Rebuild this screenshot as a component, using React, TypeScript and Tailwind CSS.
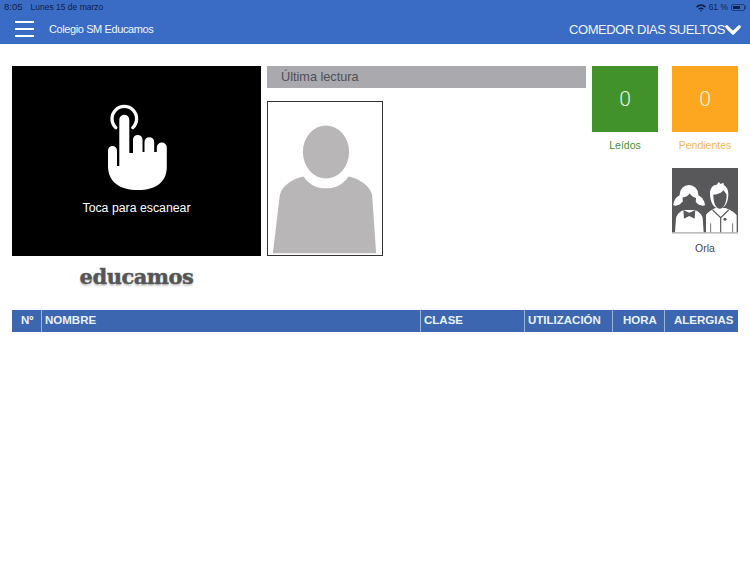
const columns = [
  { label: "Nº", width: "w-[30px]", pad: "pl-[9px]" },
  { label: "NOMBRE", width: "w-[379px]", pad: "pl-[3px]" },
  { label: "CLASE", width: "w-[104px]", pad: "pl-[3px]" },
  { label: "UTILIZACIÓN", width: "w-[88px]", pad: "pl-[3px]" },
  { label: "HORA", width: "w-[52px]", pad: "pl-[10px]" },
  { label: "ALERGIAS", width: "w-[73px]", pad: "pl-[9px]" },
];

function HandIcon() {
  return (
    <svg width="60" height="88" viewBox="106 103 60 88" className="block">
      <path
        d="M114.8 127.6 A12.3 12.3 0 1 1 131.8 127.6"
        fill="none"
        stroke="#fff"
        strokeWidth="3.3"
        strokeLinecap="round"
      />
      <path
        d="M118.3 119.7 a5 5 0 0 1 10 0 V153 H132 V139.7 a4.75 4.75 0 0 1 9.5 0 V152 H143.5 V142 a4.85 4.85 0 0 1 9.7 0 V152 H155.8 V147.5 a5 5 0 0 1 10 0 V167 C165.8 182 155 190 137 190 C119 190 107 182 107 166 V150.5 a4.5 4.5 0 0 1 9 0 V166 H118.3 Z"
        fill="#fff"
      />
    </svg>
  );
}

function PersonIcon() {
  return (
    <svg viewBox="0 0 116 154" className="block h-full w-full">
      <ellipse cx="59" cy="50" rx="23.5" ry="27" fill="#b8b6b7" />
      <path
        d="M5 153 L12 94 C14 84 26 77 36 75 C42 84 50 87 59 87 C68 87 76 84 82 75 C92 77 104 84 106 94 L110 153 Z"
        fill="#b8b6b7"
      />
    </svg>
  );
}

function OrlaIcon() {
  return (
    <svg viewBox="0 0 198 198" className="block h-full w-full">
      <rect width="198" height="198" fill="#58585a" />
      <rect y="193" width="198" height="5" fill="#d4d4d4" />
      {/* niña */}
      <path d="M9 193 L12 150 C16 136 28 128 38 126 H66 C76 128 88 136 92 150 L95 193 Z" fill="#fff" />
      <ellipse cx="51" cy="80" rx="28" ry="29" fill="#fff" />
      <path d="M28 80 C16 82 4 96 4 112 C14 116 26 110 32 100 Z" fill="#fff" />
      <path d="M74 80 C86 82 98 96 99 112 C88 116 76 110 70 100 Z" fill="#fff" />
      <path d="M32 88 C42 88 50 82 53 76 C57 84 64 88 72 90 C72 110 64 124 52 124 C40 124 31 110 32 88 Z" fill="#58585a" />
      <path d="M34 126 L52 134 L70 126 L68 152 L52 144 L36 152 Z" fill="#58585a" />
      {/* niño */}
      <path d="M102 193 V140 C110 130 122 124 130 120 H160 C170 124 186 130 194 142 V193 Z" fill="#fff" />
      <path d="M114 76 C114 60 124 50 134 50 L140 42 L146 48 L154 44 L156 52 C164 56 169 66 169 78 C169 104 158 122 142 122 C126 122 114 104 114 76 Z" fill="#fff" />
      <path d="M124 80 C134 80 148 76 154 66 C158 72 162 76 164 80 C164 106 154 122 144 122 C132 122 124 106 124 80 Z" fill="#58585a" />
      <path d="M122 126 L146 149 L170 126" fill="none" stroke="#58585a" strokeWidth="3.5" />
      <path d="M146 149 V193" stroke="#58585a" strokeWidth="3.5" />
      <circle cx="159" cy="154" r="4.5" fill="#58585a" />
      <path d="M116 166 V193 M182 166 V193" stroke="#58585a" strokeWidth="2.5" />
    </svg>
  );
}

export default function App() {
  return (
    <div className="h-[562px] w-[750px] overflow-hidden bg-white font-['Liberation_Sans',Arial,sans-serif]">
      <header className="h-[44px] bg-[#3b6cc5]">
        <div className="flex h-[14px] items-center justify-between pl-[4px] pr-[4px] pt-[1px] text-[8.5px] text-[#10204a]">
          <div className="flex items-center gap-[8px]">
            <span className="text-[9.5px]">8:05</span>
            <span>Lunes 15 de marzo</span>
          </div>
          <div className="flex items-center gap-[3px]">
            <svg width="10" height="8" viewBox="0 0 10 8">
              <path d="M0 2.6 C3 -0.6 7 -0.6 10 2.6 L8.8 3.8 C6.4 1.4 3.6 1.4 1.2 3.8 Z" fill="#10204a" />
              <path d="M2.2 4.7 C3.8 3 6.2 3 7.8 4.7 L6.7 5.8 C5.6 4.8 4.4 4.8 3.3 5.8 Z" fill="#10204a" />
              <path d="M4 6.5 C4.6 6 5.4 6 6 6.5 L5 7.7 Z" fill="#10204a" />
            </svg>
            <span>61 %</span>
            <div className="flex items-center">
              <div className="h-[7px] w-[14px] rounded-[2px] border border-[#10204a]/60 p-[1px]">
                <div className="h-full w-[7px] bg-[#10204a]" />
              </div>
              <div className="h-[3px] w-[1px] bg-[#10204a]/60" />
            </div>
          </div>
        </div>
        <div className="flex h-[30px] items-center justify-between pl-[15px] pr-[9px] text-[#eef3fb]">
          <div className="flex items-center gap-[15px]">
            <div className="flex w-[19px] flex-col gap-[4.5px]">
              <div className="h-[2.5px] bg-white" />
              <div className="h-[2.5px] bg-white" />
              <div className="h-[2.5px] bg-white" />
            </div>
            <span className="pt-[1px] text-[11px] tracking-[-0.4px]">Colegio SM Educamos</span>
          </div>
          <div className="flex items-center">
            <span className="pt-[1px] text-[13px] tracking-[-0.45px]">COMEDOR DIAS SUELTOS</span>
            <svg width="16" height="10" viewBox="0 0 16 10" className="mt-[1px] block">
              <path d="M1.8 1.8 L8 8 L14.2 1.8" fill="none" stroke="#fff" strokeWidth="3.2" strokeLinecap="round" strokeLinejoin="round" />
            </svg>
          </div>
        </div>
      </header>

      <main className="px-[12px] pt-[22px]">
        <div className="flex h-[244px]">
          <div className="w-[249px]">
            <div className="flex h-[190px] flex-col items-center bg-black pt-[37px] text-white">
              <HandIcon />
              <span className="mt-[8px] text-[12.3px]">Toca para escanear</span>
            </div>
            <div className="mt-[8px] text-center font-['DejaVu_Serif',serif] text-[21px] font-bold leading-[25px] tracking-[-0.5px] text-[#555557] [-webkit-text-stroke:0.4px_#555557] [text-shadow:0_2px_2px_#c8c8c8]">
              educamos
            </div>
          </div>

          <div className="ml-[6px] w-[319px]">
            <div className="flex h-[22px] items-center bg-[#a9a9ae] pl-[14px] pt-[1px] text-[12.7px] text-[#4f4f55]">
              Última lectura
            </div>
            <div className="mt-[13px] h-[155px] w-[116px] border border-[#333]">
              <PersonIcon />
            </div>
          </div>

          <div className="ml-[6px] w-[66px] text-center text-[10.5px] leading-[16px] text-[#46902f]">
            <div className="flex h-[66px] items-center justify-center bg-[#42922c] font-['Roboto',sans-serif] text-[21px] font-light text-[#e9f2e4]">
              0
            </div>
            <div className="mt-[5px]">Leídos</div>
          </div>

          <div className="ml-[14px] w-[66px] text-center text-[10.5px] leading-[16px]">
            <div className="flex h-[66px] items-center justify-center bg-[#fda61f] font-['Roboto',sans-serif] text-[21px] font-light text-[#fff3df]">
              0
            </div>
            <div className="mt-[5px] text-[#f5b656]">Pendientes</div>
            <div className="mt-[15px] h-[66px]">
              <OrlaIcon />
            </div>
            <div className="mt-[6px] text-[#4a4a4a]">Orla</div>
          </div>
        </div>

        <div className="flex h-[22px] bg-[#3c67b0] text-[11.5px] font-bold text-[#eaf0f8]">
          {columns.map((col, i) => (
            <div
              key={col.label}
              className={`flex items-center ${col.width} ${col.pad} ${i < columns.length - 1 ? "border-r border-[#9db4d8]" : ""}`}
            >
              {col.label}
            </div>
          ))}
        </div>
      </main>
    </div>
  );
}
